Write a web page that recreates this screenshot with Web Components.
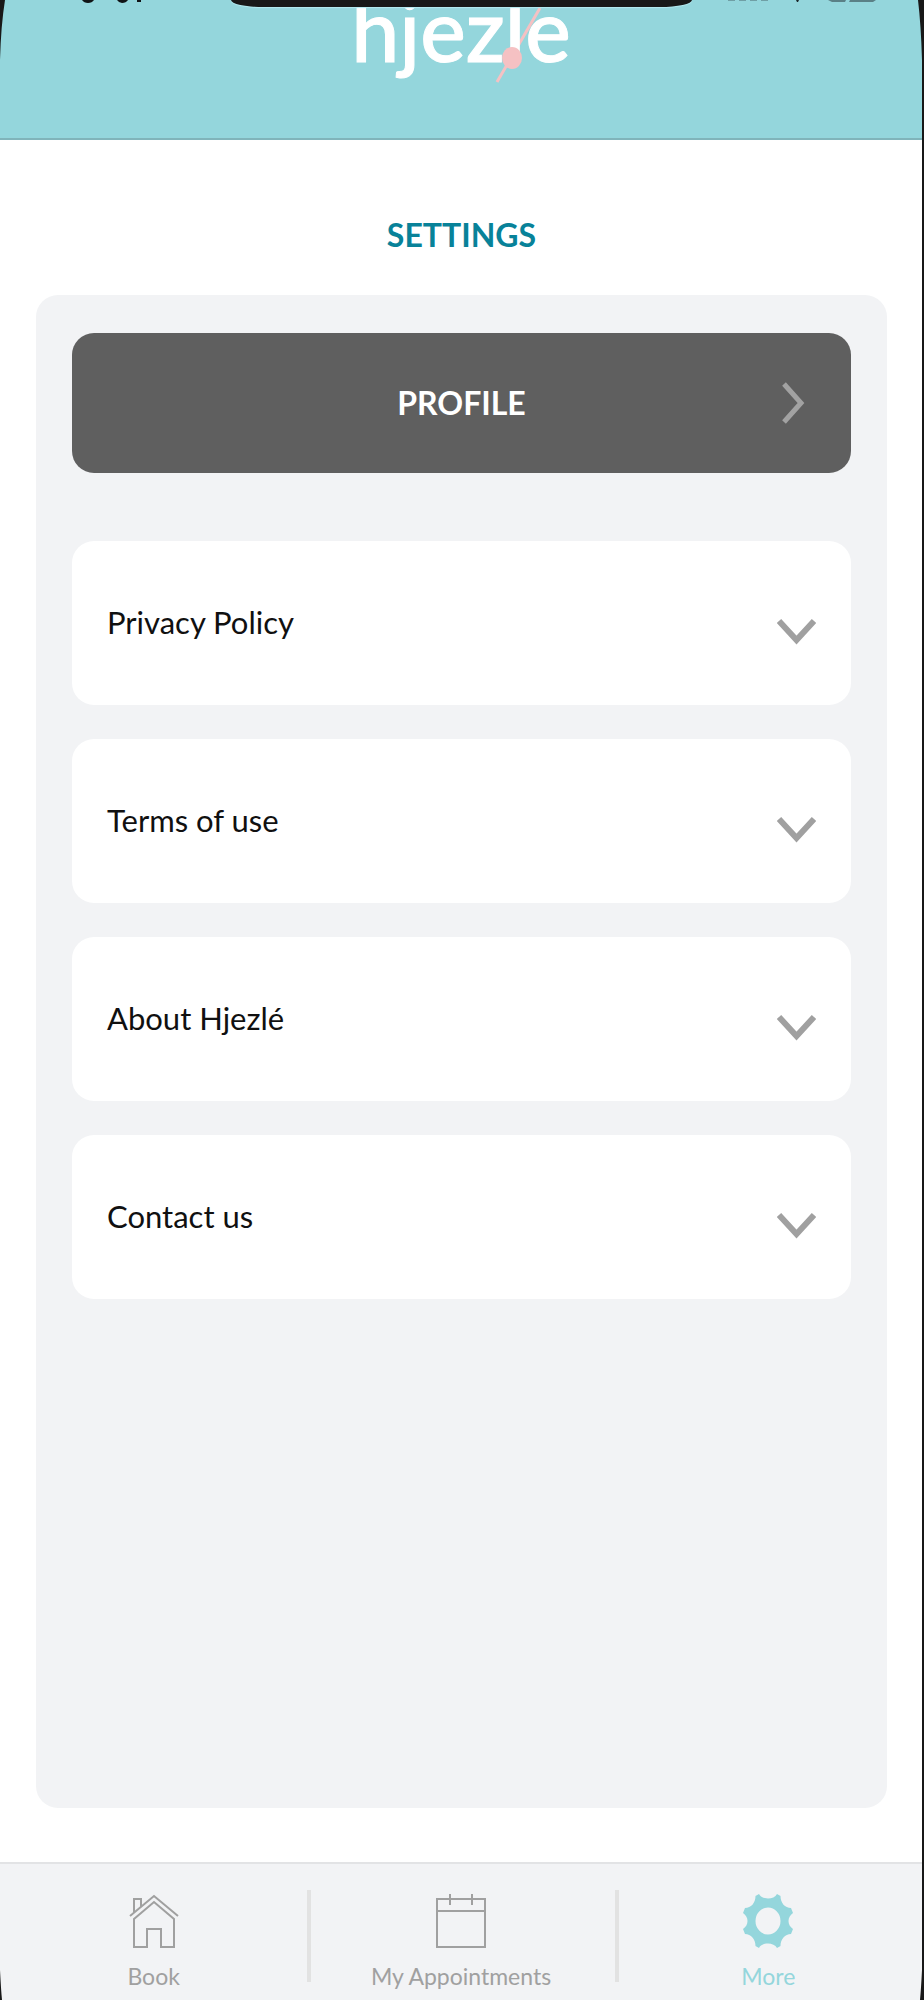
<!DOCTYPE html>
<html lang="en">
<head>
<meta charset="utf-8">
<meta name="viewport" content="width=device-width, initial-scale=1">
<title>Hjezlé – Settings</title>
<style>
  html, body { margin: 0; }
  body {
    background: #fff;
    font-family: Lato, "Open Sans", sans-serif;
    --aqua: #94d6dc;
    --panel: #f2f3f5;
    --grey: #a0a0a0;
    --bezel: #181818;
  }
</style>
</head>
<body>
<settings-app></settings-app>

<script>
const define = (name, html) => {
  const template = document.createElement('template');
  template.innerHTML = html;
  customElements.define(name, class extends HTMLElement {
    constructor() {
      super();
      this.attachShadow({ mode: 'open' }).append(template.content.cloneNode(true));
    }
  });
};

define('device-bezel', `
  <style>
    :host { position: absolute; inset: 0; pointer-events: none; overflow: hidden; }
    svg { position: absolute; display: block; fill: var(--bezel); }
    .tl { top: 0; left: 0; }
    .tr { top: 0; right: 0; }
    .bl { bottom: 0; left: 0; }
    .br { bottom: 0; right: 0; }
  </style>
  <svg class="tl" width="8" height="70"><path d="M0 0H5Q1 25 0 60Z"/></svg>
  <svg class="tr" width="8" height="70"><path d="M8 0H4Q7 25 8 60Z"/></svg>
  <svg class="bl" width="4" height="30"><path d="M0 0Q1 20 2 30H0Z"/></svg>
  <svg class="br" width="4" height="30"><path d="M4 0Q3 20 2 30H4Z"/></svg>
`);

define('status-strip', `
  <style>
    :host { position: absolute; top: 0; left: 0; right: 0; height: 9px; display: flex; justify-content: center; }
    .notch { width: 50%; height: 7px; background: var(--bezel); border-radius: 0 0 32px 32px / 0 0 7px 7px; box-shadow: 0 1px 1px #b4eaf0; }
    svg { position: absolute; top: 0; display: block; }
    .time { left: 80px; }
    .signal { right: 46px; }
  </style>
  <svg class="time" width="64" height="3" fill="#101416">
    <path d="M2 0H14Q12 3 8 3Q4 3 2 0ZM37 0H48Q46 3 42 3Q39 3 37 0ZM57 0H61V2H57Z"/>
  </svg>
  <div class="notch"></div>
  <svg class="signal" width="148" height="3">
    <path fill="#6f9fa5" d="M0 0H7V1H0ZM11 0H18V1H11ZM22 0H29V1H22ZM33 0H40V1H33Z"/>
    <path fill="#1a2628" d="M68 0H71L70 2H69Z"/>
    <path fill="#5a8086" d="M100 0H118L117 2H104ZM122 0H148L145 2H121Z"/>
  </svg>
`);

define('app-header', `
  <style>
    :host { display: block; position: relative; background: var(--aqua); border-bottom: 2px solid #80b4ba; }
    .brand { display: flex; justify-content: center; height: 138px; }
    .logo { position: relative; color: #fff; font-size: 86px; line-height: 58px; font-weight: 500; }
    .needle { position: absolute; left: 143px; top: 0; }
    .word { position: relative; -webkit-text-stroke: 1px #fff; }
  </style>
  <div class="brand">
    <div class="logo">
      <svg class="needle" width="52" height="86" fill="none">
        <path d="M3 82L46 8" stroke="#f5c1c3" stroke-width="3"/>
      </svg>
      <span class="word">hjezle</span>
      <svg class="needle" width="52" height="86">
        <ellipse cx="18" cy="58" rx="10" ry="11" fill="#f5c1c3"/>
      </svg>
    </div>
  </div>
  <status-strip></status-strip>
`);

define('profile-button', `
  <style>
    :host { display: block; }
    button {
      display: grid; grid-template-columns: 1fr auto 1fr; align-items: center;
      width: 100%; padding: 48px 46px; border: 0; border-radius: 22px;
      background: #5f5f5f; color: #fff; font: 700 32px/42px Lato, sans-serif;
    }
    .label { grid-column: 2; }
    svg { justify-self: end; display: block; }
  </style>
  <button type="button">
    <span class="label"><slot></slot></span>
    <svg width="24" height="44" fill="none" stroke="#a2a2a2" stroke-width="5"><path d="M3 3L20 22L3 41"/></svg>
  </button>
`);

define('accordion-item', `
  <style>
    :host { display: block; }
    button {
      display: flex; justify-content: space-between; align-items: flex-start;
      width: 100%; padding: 60px 35px; border: 0; border-radius: 22px;
      background: #fff; color: #101010; font: 400 31px/42px Lato, sans-serif; text-align: left;
    }
    svg { display: block; }
  </style>
  <button type="button" aria-expanded="false">
    <slot></slot>
    <svg width="39" height="44" fill="none" stroke="#a0a0a0" stroke-width="6"><path d="M2 20L19.500 39L37 20"/></svg>
  </button>
`);

define('settings-panel', `
  <style>
    :host { display: flex; flex-direction: column; flex: 1; padding: 73px 35px 54px 36px; }
    h1 { margin: 0 0 38px; color: #088299; font-size: 32px; line-height: 44px; font-weight: 700; text-align: center; }
    .panel { flex: 1; background: var(--panel); border-radius: 22px; padding: 38px 36px; }
    .list { display: grid; gap: 34px; margin-top: 68px; }
  </style>
  <h1><slot name="title"></slot></h1>
  <section class="panel">
    <slot name="primary"></slot>
    <div class="list"><slot></slot></div>
  </section>
`);

define('tab-item', `
  <style>
    :host { display: block; color: var(--grey); }
    :host([active]) { color: var(--aqua); }
    a { display: flex; flex-direction: column; align-items: center; gap: 12px; color: inherit; text-decoration: none; font-size: 23px; line-height: 32px; white-space: nowrap; }
  </style>
  <a href="#"><slot name="icon"></slot><slot></slot></a>
`);

define('tab-bar', `
  <style>
    :host { display: grid; grid-template-columns: repeat(3, 1fr); background: var(--panel); border-top: 2px solid #e2e3e5; padding: 26px 0 8px; }
    tab-item, .rule { grid-row: 1; }
    tab-item { padding-top: 4px; }
    .rule { justify-self: start; width: 4px; background: #e2e2e2; margin-bottom: 10px; }
    .first { grid-column: 1; }
    .second { grid-column: 2; }
    .third { grid-column: 3; }
    svg { display: block; }
  </style>
  <tab-item class="first">
    <svg slot="icon" width="50" height="54" fill="none" stroke="#a0a0a0" stroke-width="2">
      <path d="M1 22L25 2L49 22M5 19V5H12V13M5 53V25L25 8L45 25V53H32V35H18V53Z"/>
    </svg>
    Book
  </tab-item>
  <tab-item class="second">
    <svg slot="icon" width="50" height="54" fill="none" stroke="#a0a0a0" stroke-width="2">
      <path d="M0 5H50M0 53H50M1 5V53M49 5V53M1 17H49M14 0V11M36 0V11"/>
    </svg>
    My Appointments
  </tab-item>
  <tab-item class="third" active>
    <svg slot="icon" width="50" height="54" viewBox="0 0 50 54">
      <path fill="#94d6dc" fill-rule="evenodd" d="M12.500 2L16 0C19 6 31 6 34 0L37.500 2C37.500 9 42 14 48 14L50 19C44 23 44 31 50 35L48 40C42 40 37.500 45 37.500 52L34 54C31 48 19 48 16 54L12.500 52C12.500 45 8 40 2 40L0 35C6 31 6 23 0 19L2 14C8 14 12.500 9 12.500 2ZM25 13.500A12.500 13.500 0 1 0 25 40.500A12.500 13.500 0 1 0 25 13.500Z"/>
    </svg>
    More
  </tab-item>
  <div class="rule second"></div>
  <div class="rule third"></div>
`);

define('settings-app', `
  <style>
    :host { display: flex; flex-direction: column; position: relative; box-sizing: border-box; min-height: 100vh; border-right: 2px solid var(--bezel); }
  </style>
  <app-header></app-header>
  <settings-panel>
    <span slot="title">SETTINGS</span>
    <profile-button slot="primary">PROFILE</profile-button>
    <accordion-item>Privacy Policy</accordion-item>
    <accordion-item>Terms of use</accordion-item>
    <accordion-item>About Hjezlé</accordion-item>
    <accordion-item>Contact us</accordion-item>
  </settings-panel>
  <tab-bar></tab-bar>
  <device-bezel></device-bezel>
`);
</script>
</body>
</html>
